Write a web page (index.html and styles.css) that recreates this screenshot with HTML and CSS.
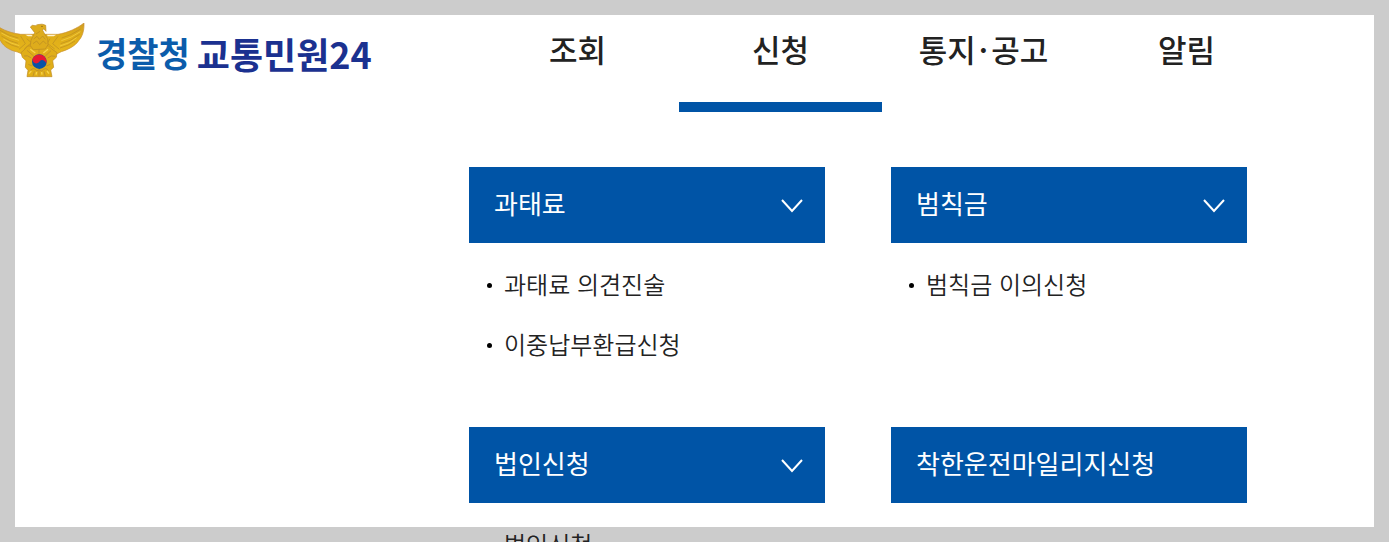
FILE: index.html
```html
<!DOCTYPE html>
<html lang="ko">
<head>
  <meta charset="UTF-8" />
  <meta name="viewport" content="width=device-width, initial-scale=1" />
  <title>경찰청 교통민원24</title>
  <link rel="stylesheet" href="styles.css">
</head>
<body>
  <div class="page">
    <header class="header">
      <a href="#" class="logo">
        <svg class="emblem" viewBox="0 69 255 165" aria-hidden="true">
          <defs>
            <linearGradient id="gold" x1="0" y1="0" x2="0" y2="1">
              <stop offset="0" stop-color="#cf9d24" />
              <stop offset="0.4" stop-color="#dfad18" />
              <stop offset="1" stop-color="#e6b71c" />
            </linearGradient>
          </defs>
          <!-- wings -->
          <path d="M-18 69 C-4 84 24 98 62 103 L174 103 C204 98 233 84 252 69 C253 92 247 110 236 122 C226 138 204 149 184 155 L166 164 L72 164 L52 156 C30 151 12 141 2 123 C-10 110 -18 92 -18 69Z" fill="url(#gold)" stroke="#c88e32" stroke-width="2" />
          <path d="M76 104 L94 104 L99 109 L84 109Z M141 104 L169 104 L161 109 L143 109Z" fill="#fff3d0" />
          <g fill="none" stroke="#b98d22" stroke-width="2">
            <path d="M0 91 Q26 108 55 114 M4 108 Q28 124 54 130 M16 125 Q34 137 56 142" />
            <path d="M242 87 Q212 107 185 114 M239 103 Q213 124 182 131 M225 123 Q204 138 180 144" />
            <path d="M62 108 L76 131 L57 148 M174 109 L158 131 L178 148 M80 116 L94 128 L73 147 M150 116 L142 130 L164 147" />
          </g>
          <g fill="none" stroke="#f0c83c" stroke-width="3">
            <path d="M4 99 Q28 114 57 121 M10 117 Q32 131 58 137" />
            <path d="M241 95 Q214 114 184 122 M230 113 Q210 131 180 138" />
          </g>
          <!-- flower shaped body -->
          <path d="M83 138 L72 150 L63 158 L67 172 L78 182 L76 202 L84 211 L81 230 L156 230 L152 210 L161 202 L158 182 L169 172 L171 158 L154 146 L145 137Z" fill="#e0ae18" stroke="#bd8a23" stroke-width="2" />
          <g fill="none" stroke="#c3942a" stroke-width="3">
            <path d="M81 151 L101 168 M117 142 L117 162 M153 152 L136 168 M72 168 Q82 164 94 174 M166 169 Q154 164 143 174" />
            <path d="M85 193 L97 198 M151 193 L139 198 M90 212 Q103 199 110 213 Q118 204 125 213 Q137 199 146 212 M103 214 L99 229 M117 209 L117 229 M132 214 L136 229" />
          </g>
          <path d="M91 148 L106 159 M144 148 L130 159 M87 221 L94 213 M108 224 L110 216 M126 224 L125 216 M147 221 L141 213" fill="none" stroke="#f7d44c" stroke-width="4" />
          <!-- neck and head -->
          <path d="M104 98 L91 81 L97 76 Q108 79 112 74 Q128 70 137 76 L138 94 L131 86 L128 91 L134 102 L143 116 L144 134 L136 147 L100 149 L91 137 L93 121Z" fill="#deac1c" stroke="#ba8a26" stroke-width="2" />
          <path d="M108 102 L120 94 M101 117 L111 109 L118 118 L128 108 L136 118 M99 131 L110 123 L119 134 L130 123 L139 132" fill="none" stroke="#b78a24" stroke-width="2" />
          <circle cx="126" cy="79" r="2" fill="#765215" />
          <!-- taegeuk -->
          <circle cx="118" cy="185" r="22" fill="#0952a5" />
          <path d="M97 178 A22 22 0 0 1 139 191 C134 178 123 177 118 185 C111 194 98 191 97 178Z" fill="#e71932" />
        </svg>
        <span class="logo-text"><span class="logo-agency">경찰청</span> <span class="logo-service">교통민원24</span></span>
      </a>
      <nav class="gnb" aria-label="주메뉴">
        <a href="#">조회</a>
        <a href="#" class="active">신청</a>
        <a href="#">통지<span class="dot">·</span>공고</a>
        <a href="#">알림</a>
      </nav>
    </header>

    <main class="submenu">
      <section class="menu-group">
        <button type="button" class="menu-title">
          과태료
          <svg class="chevron" viewBox="0 0 22 16" aria-hidden="true"><path d="M1 3 L11 14 L21 3" /></svg>
        </button>
        <ul class="menu-list">
          <li><a href="#">과태료 의견진술</a></li>
          <li><a href="#">이중납부환급신청</a></li>
        </ul>
      </section>
      <section class="menu-group">
        <button type="button" class="menu-title">
          범칙금
          <svg class="chevron" viewBox="0 0 22 16" aria-hidden="true"><path d="M1 3 L11 14 L21 3" /></svg>
        </button>
        <ul class="menu-list">
          <li><a href="#">범칙금 이의신청</a></li>
        </ul>
      </section>
      <section class="menu-group">
        <button type="button" class="menu-title">
          법인신청
          <svg class="chevron" viewBox="0 0 22 16" aria-hidden="true"><path d="M1 3 L11 14 L21 3" /></svg>
        </button>
        <ul class="menu-list">
          <li><a href="#">법인신청</a></li>
        </ul>
      </section>
      <section class="menu-group">
        <a href="#" class="menu-title">착한운전마일리지신청</a>
      </section>
    </main>
  </div>
</body>
</html>
```

FILE: styles.css
```css
/* Reset and base */
* {
  box-sizing: border-box;
}

body {
  margin: 0;
  background: #fff;
  color: #222;
  font-family: "Noto Sans CJK KR", "Noto Sans", sans-serif;
  overflow: hidden;
}

a {
  color: inherit;
  text-decoration: none;
}

/* Gray frame, the menu runs over its bottom edge */
.page {
  height: 100vh;
  border: 15px solid #ccc;
}

/* Header */
.header {
  display: grid;
  grid-template-columns: 461px 1fr;
  align-items: start;
  padding-right: 86px;
}

.logo {
  display: flex;
  align-items: flex-start;
  gap: 11px;
  margin-left: -15px;
  padding-top: 8px;
}

.emblem {
  width: 85px;
  height: 55px;
}

.logo-text {
  display: flex;
  align-items: center;
  gap: 7px;
  line-height: 60px;
  font-weight: 700;
  white-space: nowrap;
}

.logo-agency {
  color: #0b5cab;
  font-size: 34px;
}

.logo-service {
  color: #1b3190;
  font-size: 36px;
}

/* Main navigation */
.gnb {
  display: grid;
  grid-template-columns: repeat(4, 1fr);
}

.gnb a {
  height: 97px;
  border-bottom: 10px solid transparent;
  font-size: 31px;
  font-weight: 500;
  line-height: 68px;
  text-align: center;
}

.gnb a.active {
  border-bottom-color: #0054a6;
}

.gnb .dot {
  margin: 0 3px;
}

/* Sub menu */
.submenu {
  display: grid;
  grid-template-columns: 1fr 1fr;
  gap: 52px 66px;
  margin: 55px 127px 0 454px;
}

.menu-title {
  display: flex;
  align-items: flex-start;
  justify-content: space-between;
  width: 100%;
  height: 76px;
  padding: 0 22px 0 25px;
  border: none;
  background: #0054a6;
  color: #fff;
  font-family: inherit;
  font-size: 26px;
  font-weight: 400;
  line-height: 72px;
  cursor: pointer;
}

.chevron {
  align-self: center;
  width: 22px;
  height: 16px;
  fill: none;
  stroke: #fff;
  stroke-width: 2;
}

.menu-list {
  margin: 0;
  padding: 12px 0 0 18px;
  list-style: none;
}

.menu-list li {
  display: flex;
  align-items: center;
  gap: 12px;
  height: 60px;
  font-size: 24px;
  font-weight: 350;
  line-height: 32px;
}

.menu-list a {
  padding-bottom: 2px;
}

.menu-list li::before {
  content: "";
  width: 5px;
  height: 5px;
  border-radius: 50%;
  background: #000;
}
```
